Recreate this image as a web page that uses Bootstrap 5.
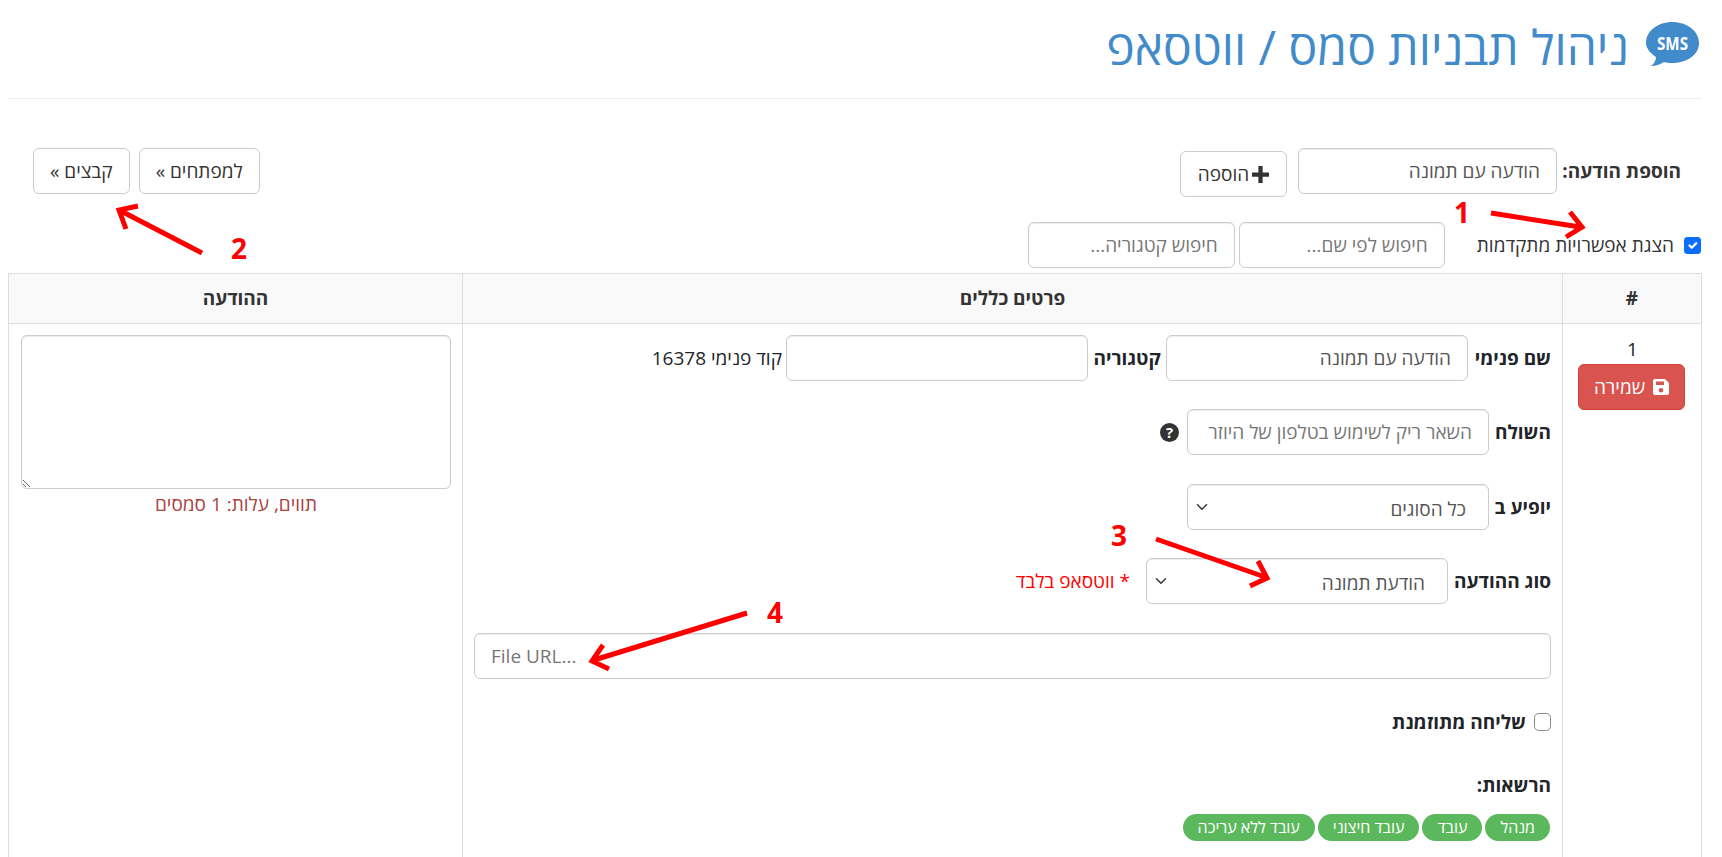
<!DOCTYPE html>
<html lang="he" dir="rtl">
<head>
<meta charset="utf-8">
<title>ניהול תבניות סמס / ווטסאפ</title>
<link href="https://cdn.jsdelivr.net/npm/bootstrap@5.3.0/dist/css/bootstrap.min.css" rel="stylesheet">
<style>
html,body{height:857px;overflow:hidden}
body{font-family:"Open Sans","Noto Sans","Liberation Sans",sans-serif;font-size:19px;color:#333;padding:0 20px 0 9px;position:relative;background:#fff}
.pg-head{height:99px;border-bottom:1px solid #eee;padding:22px 3px 0 0;gap:17px}
.pg-title{font-size:48px;line-height:50px;font-weight:400;color:#428bca;margin:0}
.tb-top{padding:49px 0 0 24px;height:123px}
.lbl{font-weight:700;white-space:nowrap;font-size:19px}
.ctl{height:46px;border:1px solid #ccc;border-radius:6px;font-size:19px;color:#555;padding:10px 16px;box-shadow:inset 0 1px 1px rgba(0,0,0,.075);text-align:right}
.ctl::placeholder{color:#777}
.w-add{width:259px}
.btn-plain{height:46px;border:1px solid #ccc;border-radius:6px;font-size:19px;color:#333;background:#fff;padding:0 16px;white-space:nowrap}
.btn-add{width:107px;padding:0;margin-top:3px;gap:3px}
.tb-add{padding-right:21px;gap:11px}
.lw-add{width:124px}
.tb-links{gap:9px}
.tb-adv{height:51px;padding-right:1px}
.tb-adv .form-check-input{width:17px;height:17px;margin:0;border-radius:3px}
.adv-txt{margin:0 10px 0 32px;font-size:19px}
.w-s1{width:206px}.w-s2{width:207px;margin-right:4px}
.tpl-table{table-layout:fixed;width:1693px;border-color:#ddd;margin:0}
.tpl-table th{background:#f9f9f9;height:50px;text-align:center;vertical-align:middle;font-size:19px;color:#333;padding:0}
.tpl-table td{padding:11px 11px 11px 12px;vertical-align:top;height:700px}
.tpl-table td.mid-cell{padding-left:11px}
.c-num{width:139px}.c-mid{width:1100px}.c-msg{width:454px}
.save-btn{width:107px;height:46px;background:#d9534f;border:1px solid #d43f3a;color:#fff;border-radius:6px;font-size:19px;padding:0;margin:0 5px 0 0}
.num-cell{text-align:center;line-height:29px;font-size:19px}
.frow{margin-bottom:28.400px;height:46px}
.lw-name{width:83px}.lw-cat{width:78px}.lw-send{width:62px}.lw-type{width:103px}
.w-i{width:302px}
.w-i2{width:302px}
.help-dot{width:19px;height:19px;border-radius:50%;background:#333;color:#fff;font-weight:700;font-size:15px;line-height:19px;text-align:center;flex:none}
.ta{height:154px;width:100%;resize:both;border:1px solid #ccc;border-radius:6px;box-shadow:inset 0 1px 1px rgba(0,0,0,.075)}
.cost{color:#a94442;text-align:center;font-size:19px;line-height:30px}
.sel{background-position:left 6px center;padding:10px 22px 10px 30px}
.red{color:#f00;font-size:19px;margin-right:16px}
.chk{width:17px;height:18px;border-radius:4px;border:1px solid #888;margin:0 !important}
.chk-row{margin-top:29px}
.perm-lab{margin-top:36px;line-height:26px}
.perm-badge{background:#5cb85c;color:#fff;font-weight:400;font-size:16px;height:27px;line-height:27px;padding:0 15px;border-radius:14px;white-space:nowrap}
.perm-wrap{gap:3px;margin-top:16px;margin-right:1px}
.url-ctl{text-align:left}
.overlay{position:absolute;left:0;top:0;pointer-events:none}
.ann{fill:#f00;font:700 28px "Open Sans",sans-serif}
</style>
</head>
<body>
<div class="pg-head d-flex align-items-start">
  <svg width="53" height="44" viewBox="0 0 53 44"><path d="M26 0C41 0 53 9 53 21S41 41 26 41c-3 0-6-.4-8-1-3 2-8 4-13 4 3-2 5-6 5-9C4 31 0 26 0 21 0 9 12 0 26 0Z" fill="#428bca"/><text x="11" y="28" textLength="31" lengthAdjust="spacingAndGlyphs" fill="#fff" font-family="Open Sans, sans-serif" font-weight="700" font-size="18" direction="ltr">SMS</text></svg>
  <h1 class="pg-title">ניהול תבניות סמס / ווטסאפ</h1>
</div>

<div class="tb-top d-flex justify-content-between align-items-start">
  <div class="tb-add d-flex align-items-start">
    <div class="d-flex align-items-center">
      <span class="lbl lw-add">הוספת הודעה:</span>
      <input class="form-control ctl w-add" value="הודעה עם תמונה">
    </div>
    <button class="btn-plain btn-add btn d-flex align-items-center justify-content-center" type="button"><svg width="17" height="17" viewBox="0 0 16 16"><path d="M6 0h4v6h6v4h-6v6H6v-6H0V6h6Z" fill="#333"/></svg>הוספה</button>
  </div>
  <div class="tb-links d-flex">
    <button class="btn-plain btn" type="button">למפתחים »</button>
    <button class="btn-plain btn" type="button">קבצים »</button>
  </div>
</div>

<div class="tb-adv d-flex align-items-start">
  <div class="d-flex align-items-center">
    <input class="form-check-input" type="checkbox" checked>
    <span class="adv-txt">הצגת אפשרויות מתקדמות</span>
    <input class="form-control ctl w-s1" placeholder="חיפוש לפי שם...">
    <input class="form-control ctl w-s2" placeholder="חיפוש קטגוריה...">
  </div>
</div>

<table class="table table-bordered tpl-table">
  <thead>
    <tr><th class="c-num">#</th><th class="c-mid">פרטים כללים</th><th class="c-msg">ההודעה</th></tr>
  </thead>
  <tbody>
    <tr>
      <td class="num-cell">1
        <button class="save-btn btn d-flex align-items-center justify-content-center gap-2" type="button"><svg width="16" height="16" viewBox="0 0 16 16"><path d="M2 0h10l4 4v10a2 2 0 0 1-2 2H2a2 2 0 0 1-2-2V2a2 2 0 0 1 2-2Zm1 2.500v3.500h8V2.500Zm5 6.500a2.300 2.300 0 1 0 0 4.600 2.300 2.300 0 0 0 0-4.600Z" fill="#fff" fill-rule="evenodd"/></svg>שמירה</button>
      </td>
      <td class="mid-cell">
        <div class="frow d-flex align-items-center">
          <span class="lbl lw-name">שם פנימי</span>
          <input class="form-control ctl w-i" value="הודעה עם תמונה">
          <span class="lbl lw-cat text-center">קטגוריה</span>
          <input class="form-control ctl w-i2 ms-1" value="">
          <span>קוד פנימי 16378</span>
        </div>
        <div class="frow d-flex align-items-center">
          <span class="lbl lw-send">השולח</span>
          <input class="form-control ctl w-i2 ms-2" placeholder="השאר ריק לשימוש בטלפון של היוזר">
          <span class="help-dot">?</span>
        </div>
        <div class="frow d-flex align-items-center">
          <span class="lbl lw-send">יופיע ב</span>
          <select class="form-select ctl sel w-i2"><option>כל הסוגים</option></select>
        </div>
        <div class="frow d-flex align-items-center">
          <span class="lbl lw-type">סוג ההודעה</span>
          <select class="form-select ctl sel w-i2"><option>הודעת תמונה</option></select>
          <span class="red">* ווטסאפ בלבד</span>
        </div>
        <input class="form-control ctl url-ctl" dir="ltr" placeholder="File URL...">
        <div class="chk-row d-flex align-items-center gap-2 lbl">
          <input class="form-check-input chk" type="checkbox">
          <span>שליחה מתוזמנת</span>
        </div>
        <div class="lbl perm-lab">הרשאות:</div>
        <div class="perm-wrap d-flex">
          <span class="badge perm-badge">מנהל</span>
          <span class="badge perm-badge">עובד</span>
          <span class="badge perm-badge">עובד חיצוני</span>
          <span class="badge perm-badge">עובד ללא עריכה</span>
        </div>
      </td>
      <td>
        <textarea class="form-control ta"></textarea>
        <div class="cost">תווים, עלות: 1 סמסים</div>
      </td>
    </tr>
  </tbody>
</table>

<svg class="overlay" width="1722" height="857" viewBox="0 0 1722 857" direction="ltr">
  <g fill="none" stroke="#f00" stroke-width="5">
    <path d="M1491 213 1580 227M1570 212 1582 227 1566 237"/>
    <path d="M202 253 121 211M138 206 119 210 126 229"/>
    <path d="M1156 539 1265 577M1258 561 1267 578 1250 586"/>
    <path d="M747 613 594 660M603 645 592 661 609 669"/>
  </g>
  <text class="ann" x="1454" y="223">1</text>
  <text class="ann" x="231" y="259">2</text>
  <text class="ann" x="1111" y="546">3</text>
  <text class="ann" x="767" y="623">4</text>
</svg>
</body>
</html>
